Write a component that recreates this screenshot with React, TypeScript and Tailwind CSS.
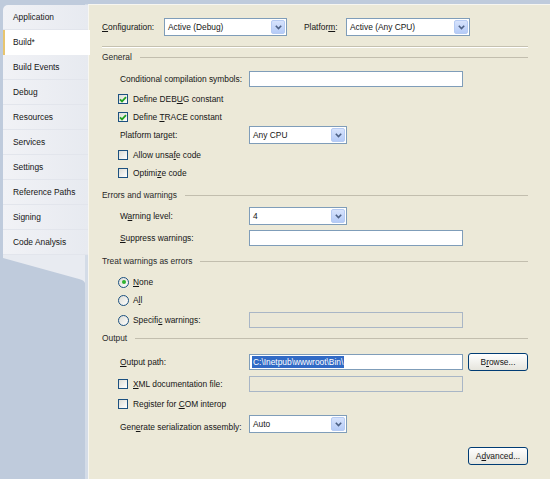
import React from "react";

const tabs = [
  "Application",
  "Build*",
  "Build Events",
  "Debug",
  "Resources",
  "Services",
  "Settings",
  "Reference Paths",
  "Signing",
  "Code Analysis",
];

function U({ children }: { children: React.ReactNode }) {
  return <span className="underline underline-offset-[1px]">{children}</span>;
}

function Chevron() {
  return (
    <svg width="7" height="5" viewBox="0 0 7 5">
      <path d="M0.8 0.8 L3.5 3.6 L6.2 0.8" fill="none" stroke="#4d6185" strokeWidth="1.6" />
    </svg>
  );
}

function Dropdown({ value, className }: { value: string; className: string }) {
  return (
    <div className={`h-[18px] border border-[#7f9db9] bg-white flex items-center ${className}`}>
      <span className="flex-1 pl-[3px]">{value}</span>
      <div className="h-[14px] w-[14px] mr-[1px] rounded-[2px] border border-[#b6cbf3] bg-gradient-to-b from-[#d7e3fc] to-[#b5cbf7] flex items-center justify-center">
        <Chevron />
      </div>
    </div>
  );
}

function TextBox({ disabled, className, children }: { disabled?: boolean; className?: string; children?: React.ReactNode }) {
  return (
    <div
      className={`h-[16px] w-[214px] border flex items-center px-[2px] ${
        disabled ? "border-[#a9b6c6] bg-[#ebe8d8]" : "border-[#7f9db9] bg-white"
      } ${className ?? ""}`}
    >
      {children}
    </div>
  );
}

function Check({ checked }: { checked?: boolean }) {
  return (
    <div className="w-[10px] h-[10px] border border-[#1c5180] bg-gradient-to-br from-[#dcdcd5] to-white flex items-center justify-center shrink-0">
      {checked && (
        <svg width="8" height="7" viewBox="0 0 8 7">
          <path d="M1 3.4 L3 5.4 L7 1.2" fill="none" stroke="#21a121" strokeWidth="1.8" />
        </svg>
      )}
    </div>
  );
}

function Radio({ checked }: { checked?: boolean }) {
  return (
    <div className="w-[11px] h-[11px] rounded-full border border-[#1c5180] bg-gradient-to-br from-[#dcdcd5] to-white flex items-center justify-center shrink-0">
      {checked && <div className="w-[4px] h-[4px] rounded-full bg-[#2fb32f]" />}
    </div>
  );
}

function XPButton({ children }: { children: React.ReactNode }) {
  return (
    <div className="h-[18px] w-[60px] rounded-[3px] border border-[#003c74] bg-gradient-to-b from-white to-[#e6e5dd] flex items-center justify-center">
      {children}
    </div>
  );
}

function Header({ children }: { children: React.ReactNode }) {
  return (
    <div className="h-[12px] flex items-center gap-2 text-[#2a2a2a]">
      <span>{children}</span>
      <div className="flex-1 h-px bg-[#c2beae]" />
    </div>
  );
}

export default function App() {
  return (
    <div className="w-[550px] h-[479px] overflow-hidden bg-[#bfcbdc] pt-[4px] flex font-['Liberation_Sans',Arial,sans-serif] text-[8.4px] leading-none text-[#151515]">
      {/* tab strip */}
      <div className="w-[88px] shrink-0 border-r-[3px] border-[#d4dce7] pt-[1px] flex flex-col">
        <div className="ml-[3px] w-[85px] rounded-tl-[5px] bg-gradient-to-r from-[#f1f2f6] to-[#e7eaf0]">
          {tabs.map((t) => {
            const sel = t === "Build*";
            return (
              <div
                key={t}
                className={
                  sel
                    ? "relative z-10 w-[87px] h-[25px] bg-white border-l-2 border-[#e8c56e] pl-[8px] flex items-center"
                    : "h-[25px] border-b border-[#e2e5ec] pl-[10px] flex items-center"
                }
              >
                {t}
              </div>
            );
          })}
        </div>
        <svg width="85" height="28" viewBox="0 0 85 28" className="block">
          <path d="M3 0 H85 V28 Q84 25 79 24 L3 3 Z" fill="#e8ebf1" />
        </svg>
      </div>

      {/* property page */}
      <div className="flex-1 bg-[#ece9d8] border-l border-t border-[#f7f6f0] pl-[13px] pr-[22px] pt-[13px] flex flex-col">
        <div className="h-[18px] flex items-center">
          <span className="w-[62px]">
            <U>C</U>onfiguration:
          </span>
          <Dropdown value="Active (Debug)" className="w-[123px]" />
          <span className="w-[42px] ml-[17px]">
            Platfor<U>m</U>:
          </span>
          <Dropdown value="Active (Any CPU)" className="w-[124px]" />
        </div>

        <div className="mt-[10px] h-[2px] border-t border-b border-t-[#c5c1b0] border-b-white" />

        <div className="mt-[3px]">
          <Header>General</Header>
        </div>

        <div className="ml-[16px] flex flex-col">
          <div className="mt-[8px] h-[16px] flex items-center">
            <span className="w-[131px] pl-[2px]">Conditional compilation symbols:</span>
            <TextBox />
          </div>
          <div className="mt-[6px] h-[12px] flex items-center gap-[5px]">
            <Check checked />
            <span>
              Define DEB<U>U</U>G constant
            </span>
          </div>
          <div className="mt-[6px] h-[12px] flex items-center gap-[5px]">
            <Check checked />
            <span>
              Define <U>T</U>RACE constant
            </span>
          </div>
          <div className="mt-[3px] h-[18px] flex items-center">
            <span className="w-[131px] pl-[2px]">Platform target:</span>
            <Dropdown value="Any CPU" className="w-[98px]" />
          </div>
          <div className="mt-[5px] h-[12px] flex items-center gap-[5px]">
            <Check />
            <span>
              Allow unsa<U>f</U>e code
            </span>
          </div>
          <div className="mt-[6px] h-[12px] flex items-center gap-[5px]">
            <Check />
            <span>
              Optimi<U>z</U>e code
            </span>
          </div>
        </div>

        <div className="mt-[10px]">
          <Header>Errors and warnings</Header>
        </div>

        <div className="ml-[16px] flex flex-col">
          <div className="mt-[6px] h-[18px] flex items-center">
            <span className="w-[131px] pl-[2px]">
              W<U>a</U>rning level:
            </span>
            <Dropdown value="4" className="w-[98px]" />
          </div>
          <div className="mt-[5px] h-[16px] flex items-center">
            <span className="w-[131px] pl-[2px]">
              <U>S</U>uppress warnings:
            </span>
            <TextBox />
          </div>
        </div>

        <div className="mt-[9px]">
          <Header>Treat warnings as errors</Header>
        </div>

        <div className="ml-[16px] flex flex-col">
          <div className="mt-[9px] h-[12px] flex items-center gap-[4px]">
            <Radio checked />
            <span>
              <U>N</U>one
            </span>
          </div>
          <div className="mt-[6px] h-[12px] flex items-center gap-[4px]">
            <Radio />
            <span>
              A<U>l</U>l
            </span>
          </div>
          <div className="mt-[6px] h-[16px] flex items-center">
            <div className="w-[131px] flex items-center gap-[4px]">
              <Radio />
              <span>
                Specifi<U>c</U> warnings:
              </span>
            </div>
            <TextBox disabled />
          </div>
        </div>

        <div className="mt-[4px]">
          <Header>Output</Header>
        </div>

        <div className="ml-[16px] flex flex-col">
          <div className="mt-[9px] h-[18px] flex items-center">
            <span className="w-[131px] pl-[2px]">
              <U>O</U>utput path:
            </span>
            <TextBox>
              <span className="bg-[#316ac5] text-white px-[1px] py-[2px]">C:\Inetpub\wwwroot\Bin\</span>
            </TextBox>
            <div className="ml-[5px]">
              <XPButton>
                B<U>r</U>owse...
              </XPButton>
            </div>
          </div>
          <div className="mt-[5px] h-[16px] flex items-center">
            <div className="w-[131px] flex items-center gap-[5px]">
              <Check />
              <span>
                <U>X</U>ML documentation file:
              </span>
            </div>
            <TextBox disabled />
          </div>
          <div className="mt-[6px] h-[12px] flex items-center gap-[5px]">
            <Check />
            <span>
              Register for <U>C</U>OM interop
            </span>
          </div>
          <div className="mt-[5px] h-[18px] flex items-center">
            <span className="w-[131px] pl-[2px] pt-[6px]">
              Gen<U>e</U>rate serialization assembly:
            </span>
            <Dropdown value="Auto" className="w-[98px]" />
          </div>
        </div>

        <div className="mt-[14px] flex justify-end">
          <XPButton>
            A<U>d</U>vanced...
          </XPButton>
        </div>
      </div>
    </div>
  );
}
